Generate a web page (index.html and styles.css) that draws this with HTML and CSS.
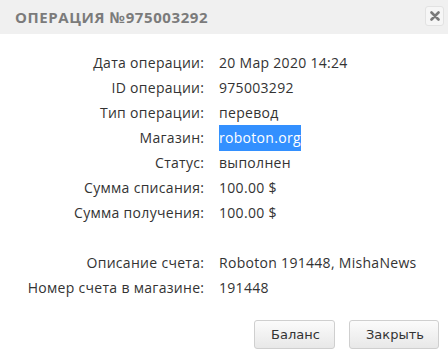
FILE: index.html
```html
<!DOCTYPE html>
<html lang="ru">
<head>
    <meta charset="UTF-8">
    <title>Операция №975003292</title>
    <link rel="stylesheet" href="styles.css">
</head>
<body>

    <div class="dialog">
        <div class="dialog-title">
            <span class="title-text">Операция №975003292</span>
            <button class="close-btn" title="Закрыть">
                <svg width="10" height="10" viewBox="0 0 10 10">
                    <path d="M1.5 1.5 L8.5 8.5 M8.5 1.5 L1.5 8.5" stroke="#7a7a7a" stroke-width="2.6" stroke-linecap="round"/>
                </svg>
            </button>
        </div>

        <div class="dialog-body">
            <div class="info">
                <div class="label">Дата операции:</div>
                <div class="value">20 Мар 2020 14:24</div>

                <div class="label">ID операции:</div>
                <div class="value">975003292</div>

                <div class="label">Тип операции:</div>
                <div class="value">перевод</div>

                <div class="label">Магазин:</div>
                <div class="value"><span class="selected">roboton.org</span></div>

                <div class="label">Статус:</div>
                <div class="value">выполнен</div>

                <div class="label">Сумма списания:</div>
                <div class="value">100.00 $</div>

                <div class="label">Сумма получения:</div>
                <div class="value">100.00 $</div>

                <div class="spacer"></div>

                <div class="label">Описание счета:</div>
                <div class="value">Roboton 191448, MishaNews</div>

                <div class="label">Номер счета в магазине:</div>
                <div class="value">191448</div>
            </div>
        </div>

        <div class="dialog-buttons">
            <button class="btn">Баланс</button>
            <button class="btn">Закрыть</button>
        </div>
    </div>

</body>
</html>
```

FILE: styles.css
```css
/* Page */
body {
    margin: 0;
    padding: 0;
    background: #fff;
    font-family: "Open Sans", Arial, sans-serif;
}

/* Dialog */
.dialog {
    width: 448px;
    height: 360px;
    display: flex;
    flex-direction: column;
}

/* Title Bar */
.dialog-title {
    height: 34px;
    background: #f0f0f0;
    display: flex;
    align-items: center;
    justify-content: space-between;
    padding: 0 4px 0 15px;
}

.title-text {
    font-family: "Open Sans", Arial, sans-serif;
    font-weight: bold;
    font-size: 15px;
    letter-spacing: 0.6px;
    text-transform: uppercase;
    color: #7b7b7b;
}

.close-btn {
    width: 19px;
    height: 20px;
    padding: 0;
    margin-top: -3px;
    border: 1px solid #e2e2e2;
    border-radius: 3px;
    background: #f6f6f6;
    display: flex;
    align-items: center;
    justify-content: center;
    cursor: pointer;
}

/* Info Table */
.dialog-body {
    padding: 16px 0 0 0;
}

.info {
    display: grid;
    grid-template-columns: 204px auto;
    column-gap: 15px;
    grid-auto-rows: 25px;
    font-size: 14px;
    letter-spacing: 0.3px;
    color: #333;
}

.label {
    text-align: right;
    line-height: 25px;
    margin-right: -0.3px;
}

.value {
    line-height: 25px;
    white-space: nowrap;
}

.spacer {
    grid-column: 1 / 3;
    height: 26px;
}

.selected {
    background: #3390ff;
    color: #fff;
    padding: 3px 0 4px 0;
}

/* Buttons */
.dialog-buttons {
    margin-top: auto;
    display: flex;
    justify-content: flex-end;
    gap: 14px;
    padding: 0 9px 11px 0;
}

.btn {
    height: 29px;
    padding: 0 16px;
    font-family: Verdana, "DejaVu Sans", sans-serif;
    font-size: 13px;
    color: #333;
    background: linear-gradient(#fbfbfb, #e8e8e8);
    border: 1px solid #cfcfcf;
    border-radius: 3px;
    cursor: pointer;
}

.btn:first-child {
    width: 81px;
}

.btn:last-child {
    width: 90px;
}
```
